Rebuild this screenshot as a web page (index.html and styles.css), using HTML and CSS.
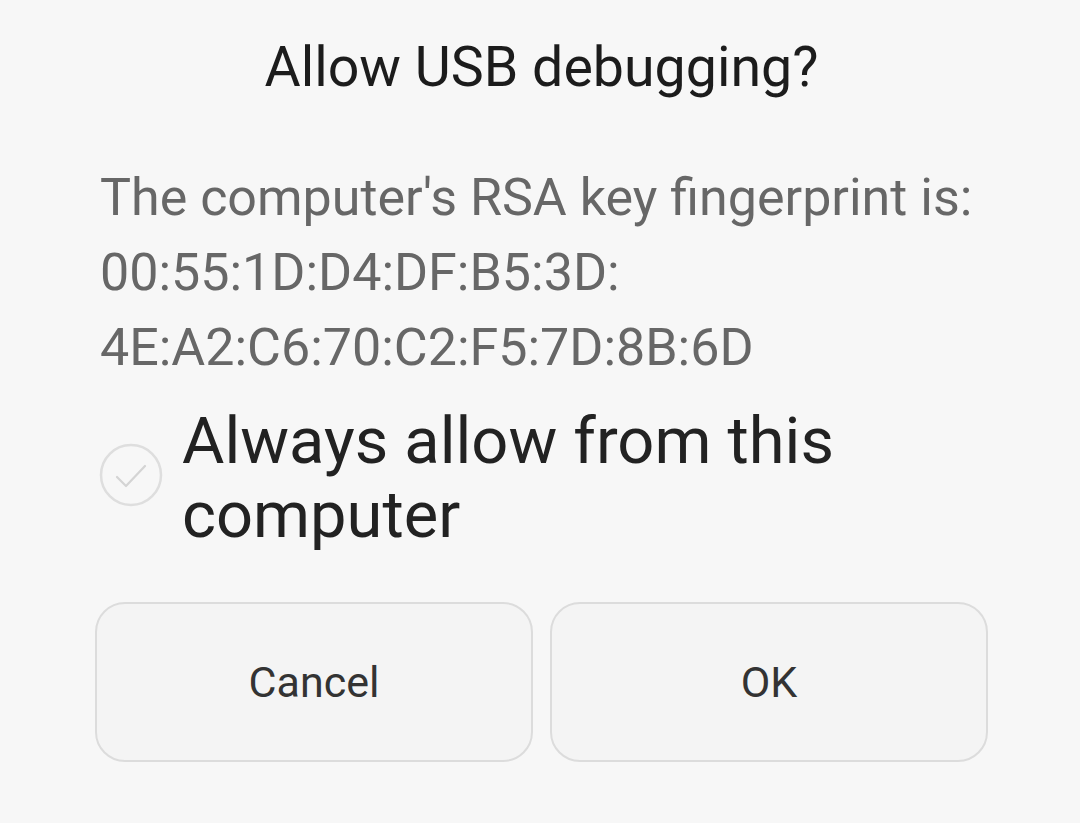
FILE: index.html
```html
<!DOCTYPE html>
<html lang="en">
<head>
<meta charset="utf-8">
<title>Allow USB debugging?</title>
<link rel="stylesheet" href="styles.css">
</head>
<body>
<div class="dialog">
  <h1 class="title">Allow USB debugging?</h1>
  <div class="message">
    <p>The computer's RSA key fingerprint is:</p>
    <p>00:55:1D:D4:DF:B5:3D:</p>
    <p>4E:A2:C6:70:C2:F5:7D:8B:6D</p>
  </div>
  <label class="check-row">
    <span class="check">
      <svg viewBox="0 0 64 64" width="64" height="64" aria-hidden="true">
        <circle cx="32" cy="32" r="30" fill="none" stroke="#dedede" stroke-width="2.5"/>
        <path d="M18 34 L27 43 L46 23" fill="none" stroke="#d4d4d4" stroke-width="2.2" stroke-linecap="round" stroke-linejoin="round"/>
      </svg>
    </span>
    <span class="check-label">Always allow from this computer</span>
  </label>
  <div class="buttons">
    <button class="btn">Cancel</button>
    <button class="btn">OK</button>
  </div>
</div>
</body>
</html>
```
FILE: styles.css
```css
html, body {
  margin: 0;
  padding: 0;
  background: #f7f7f7;
}
body {
  width: 1080px;
  height: 823px;
  overflow: hidden;
  font-family: Roboto, "Noto Sans", "Liberation Sans", sans-serif;
}
.dialog {
  padding: 30px 92px 0 95px;
  display: flex;
  flex-direction: column;
}
.title {
  margin: 0;
  font-weight: 400;
  font-size: 55.5px;
  line-height: 76px;
  color: #1c1c1c;
  text-align: center;
}
.message {
  margin-top: 54px;
  padding-left: 5px;
  color: #676767;
  font-size: 52px;
  line-height: 75px;
}
.message p {
  margin: 0;
}
.check-row {
  display: flex;
  align-items: center;
  margin-top: 19px;
  padding-left: 4px;
}
.check {
  width: 64px;
  height: 64px;
  flex: none;
  display: flex;
  margin-top: -6px;
}
.check-label {
  flex: 1;
  margin-left: 19px;
  font-size: 65px;
  line-height: 74px;
  color: #222;
}
.buttons {
  display: flex;
  gap: 17px;
  margin-top: 50px;
}
.btn {
  flex: none;
  width: 438px;
  height: 160px;
  border: 2px solid #dcdcdc;
  border-radius: 30px;
  background: #f4f4f4;
  font-family: inherit;
  font-size: 43px;
  color: #333;
  padding: 0;
}
```
